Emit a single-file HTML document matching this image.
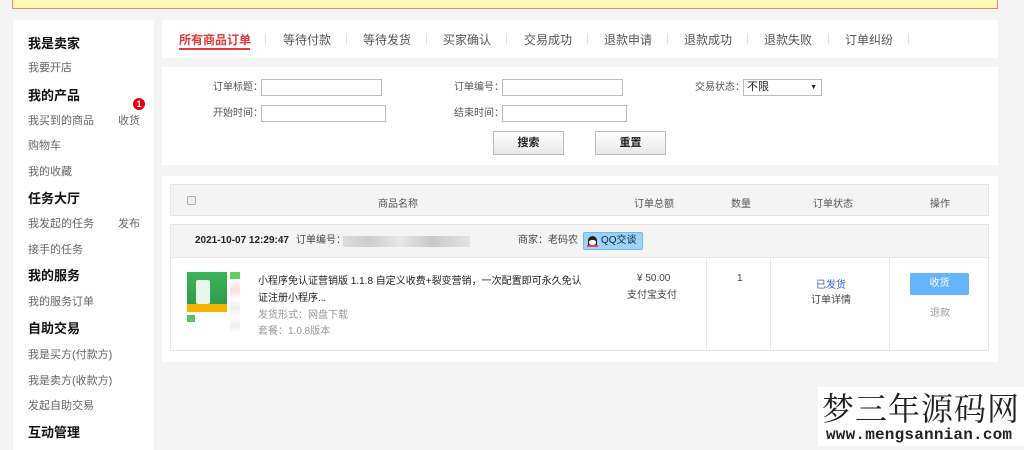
<!DOCTYPE html>
<html><head><meta charset="utf-8"><style>
*{margin:0;padding:0;box-sizing:border-box}
body{width:1024px;height:446px;background:#f4f4f4;position:relative;overflow:hidden;font-family:"Liberation Sans","Noto Sans CJK SC",sans-serif;color:#333}
.a{position:absolute;white-space:nowrap}
.h{font-size:13px;font-weight:bold;color:#111;left:28px}
.l{font-size:11px;color:#666;left:28px}
.tab{font-size:12px;color:#555;top:31px}
.sep{position:absolute;top:33px;width:1px;height:11px;background:#e0e0e0}
.lab{font-size:10px;color:#555;line-height:14px}
.inp{position:absolute;border:1px solid #bbb;background:#fff;height:17px}
.btn{position:absolute;border:1px solid #bbb;background:linear-gradient(#fff,#e8e8e8);font-size:11px;font-weight:bold;text-align:center;line-height:22px;color:#222;width:71px;height:24px}
.th{font-size:10px;color:#555;top:195px}
.r{font-size:10px;color:#444;line-height:14px;top:234px}
</style></head><body>
<div class="a" style="left:12px;top:0;width:986px;height:9px;background:#fffbb4;border:1px solid #f08070;border-top:none"></div>
<div class="a" style="left:13px;top:20px;width:141px;height:430px;background:#fff"></div>
<div class="a h" style="top:33px">我是卖家</div>
<div class="a l" style="top:59px">我要开店</div>
<div class="a h" style="top:85px">我的产品</div>
<div class="a l" style="top:112px">我买到的商品</div>
<div class="a l" style="top:112px;left:118px">收货</div>
<div class="a" style="left:133px;top:98px;width:12px;height:12px;border-radius:6px;background:#e4000f;color:#fff;font-size:9px;font-weight:bold;text-align:center;line-height:12px">1</div>
<div class="a l" style="top:137px">购物车</div>
<div class="a l" style="top:163px">我的收藏</div>
<div class="a h" style="top:188px">任务大厅</div>
<div class="a l" style="top:215px">我发起的任务</div>
<div class="a l" style="top:215px;left:118px">发布</div>
<div class="a l" style="top:241px">接手的任务</div>
<div class="a h" style="top:265px">我的服务</div>
<div class="a l" style="top:293px">我的服务订单</div>
<div class="a h" style="top:318px">自助交易</div>
<div class="a l" style="top:346px">我是买方(付款方)</div>
<div class="a l" style="top:372px">我是卖方(收款方)</div>
<div class="a l" style="top:397px">发起自助交易</div>
<div class="a h" style="top:422px">互动管理</div>

<div class="a" style="left:162px;top:20px;width:836px;height:38px;background:#fff"></div>
<div class="a tab" style="left:179px;color:#e4393c;font-weight:bold">所有商品订单</div>
<div class="a" style="left:179px;top:48px;width:71px;height:2px;background:#e4393c"></div>
<div class="sep" style="left:265px"></div>
<div class="a tab" style="left:283px">等待付款</div><div class="sep" style="left:346px"></div>
<div class="a tab" style="left:363px">等待发货</div><div class="sep" style="left:426px"></div>
<div class="a tab" style="left:443px">买家确认</div><div class="sep" style="left:506px"></div>
<div class="a tab" style="left:524px">交易成功</div><div class="sep" style="left:587px"></div>
<div class="a tab" style="left:604px">退款申请</div><div class="sep" style="left:667px"></div>
<div class="a tab" style="left:684px">退款成功</div><div class="sep" style="left:747px"></div>
<div class="a tab" style="left:764px">退款失败</div><div class="sep" style="left:828px"></div>
<div class="a tab" style="left:845px">订单纠纷</div><div class="sep" style="left:908px"></div>

<div class="a" style="left:162px;top:67px;width:836px;height:98px;background:#fff"></div>
<div class="a lab" style="left:213px;top:81px">订单标题：</div><div class="inp" style="left:261px;top:79px;width:121px"></div>
<div class="a lab" style="left:213px;top:107px">开始时间：</div><div class="inp" style="left:261px;top:105px;width:125px"></div>
<div class="a lab" style="left:454px;top:81px">订单编号：</div><div class="inp" style="left:502px;top:79px;width:121px"></div>
<div class="a lab" style="left:454px;top:107px">结束时间：</div><div class="inp" style="left:502px;top:105px;width:125px"></div>
<div class="a lab" style="left:695px;top:81px">交易状态：</div>
<div class="inp" style="left:743px;top:79px;width:79px;font-size:11px;line-height:15px;padding-left:3px;color:#222">不限<span style="position:absolute;right:4px;font-size:7px">▼</span></div>
<div class="btn" style="left:493px;top:131px">搜索</div>
<div class="btn" style="left:595px;top:131px">重置</div>

<div class="a" style="left:162px;top:176px;width:836px;height:186px;background:#fff"></div>
<div class="a" style="left:170px;top:184px;width:819px;height:32px;background:#f4f4f4;border:1px solid #e6e6e6"></div>
<div class="a" style="left:187px;top:196px;width:9px;height:9px;border:1px solid #aaa;border-radius:2px;background:#eee"></div>
<div class="a th" style="left:378px">商品名称</div>
<div class="a th" style="left:634px">订单总额</div>
<div class="a th" style="left:731px">数量</div>
<div class="a th" style="left:813px">订单状态</div>
<div class="a th" style="left:930px">操作</div>
<div class="a" style="left:170px;top:224px;width:819px;height:127px;border:1px solid #e6e6e6"></div>
<div class="a" style="left:171px;top:225px;width:817px;height:33px;background:#f4f4f4;border-bottom:1px solid #e6e6e6"></div>
<div class="a r" style="left:195px;font-weight:bold;color:#222">2021-10-07 12:29:47</div>
<div class="a r" style="left:296px">订单编号：</div>
<div class="a" style="left:343px;top:236px;width:127px;height:11px;background:linear-gradient(90deg,#ddd,#ccc 20%,#e8e8e8 45%,#c8c8c8 70%,#e4e4e4)"></div>
<div class="a r" style="left:518px">商家：老码农</div>
<div class="a" style="left:583px;top:232px;width:60px;height:18px;background:#9dd3f8;border:1px solid #6cbaf0;border-radius:2px;font-size:10px;line-height:16px;padding-left:17px;color:#123">QQ交谈<span style="position:absolute;left:4px;top:3px;width:9px;height:11px;background:#222;border-radius:5px 5px 3px 3px"></span><span style="position:absolute;left:5px;top:7px;width:7px;height:5px;background:#fff;border-radius:3px"></span><span style="position:absolute;left:3px;top:12px;width:11px;height:2px;background:#e44"></span></div>
<div class="a" style="left:706px;top:258px;width:1px;height:92px;background:#e6e6e6"></div>
<div class="a" style="left:770px;top:258px;width:1px;height:92px;background:#e6e6e6"></div>
<div class="a" style="left:889px;top:258px;width:1px;height:92px;background:#e6e6e6"></div>
<div class="a" style="left:187px;top:272px;width:40px;height:40px;background:linear-gradient(#3db35a,#2e9e4c 80%,#f5b400 80%)"></div>
<div class="a" style="left:196px;top:280px;width:14px;height:24px;background:#e7f5ea;border-radius:2px"></div>
<div class="a" style="left:187px;top:315px;width:8px;height:7px;background:#5bbf6a"></div>
<div class="a" style="left:230px;top:272px;width:10px;height:60px;background:linear-gradient(#6c6 0,#6c6 12%,#fff 12%,#fdd 30%,#fff 45%,#eee 60%,#fff 75%,#eee 90%,#fff)"></div>
<div class="a" style="left:258px;top:273px;font-size:10px;color:#222;line-height:17px;width:330px;white-space:normal">小程序免认证营销版 1.1.8 自定义收费+裂变营销，一次配置即可永久免认证注册小程序...</div>
<div class="a" style="left:258px;top:306px;font-size:10px;color:#999">发货形式：网盘下载</div>
<div class="a" style="left:258px;top:322px;font-size:10px;color:#999">套餐：1.0.8版本</div>
<div class="a" style="left:637px;top:273px;font-size:10px;color:#444">¥ 50.00</div>
<div class="a" style="left:627px;top:286px;font-size:10px;color:#444">支付宝支付</div>
<div class="a" style="left:737px;top:273px;font-size:10px;color:#444">1</div>
<div class="a" style="left:816px;top:276px;font-size:10px;color:#3366cc">已发货</div>
<div class="a" style="left:811px;top:291px;font-size:10px;color:#444">订单详情</div>
<div class="a" style="left:910px;top:273px;width:59px;height:22px;background:#66b5fa;border-radius:2px;color:#fff;font-size:10px;text-align:center;line-height:22px">收货</div>
<div class="a" style="left:930px;top:304px;font-size:10px;color:#999">退款</div>

<div class="a" style="left:818px;top:387px;width:206px;height:59px;background:#fff"></div>
<div class="a" style="left:822px;top:389px;font-size:32px;color:#222;font-family:'Noto Serif CJK SC','Noto Sans CJK SC',serif;letter-spacing:1px;line-height:36px">梦三年源码网</div>
<div class="a" style="left:826px;top:426px;font-size:16px;color:#222;font-family:'Liberation Mono',monospace;font-weight:bold;letter-spacing:0.2px">www.mengsannian.com</div>
</body></html>
